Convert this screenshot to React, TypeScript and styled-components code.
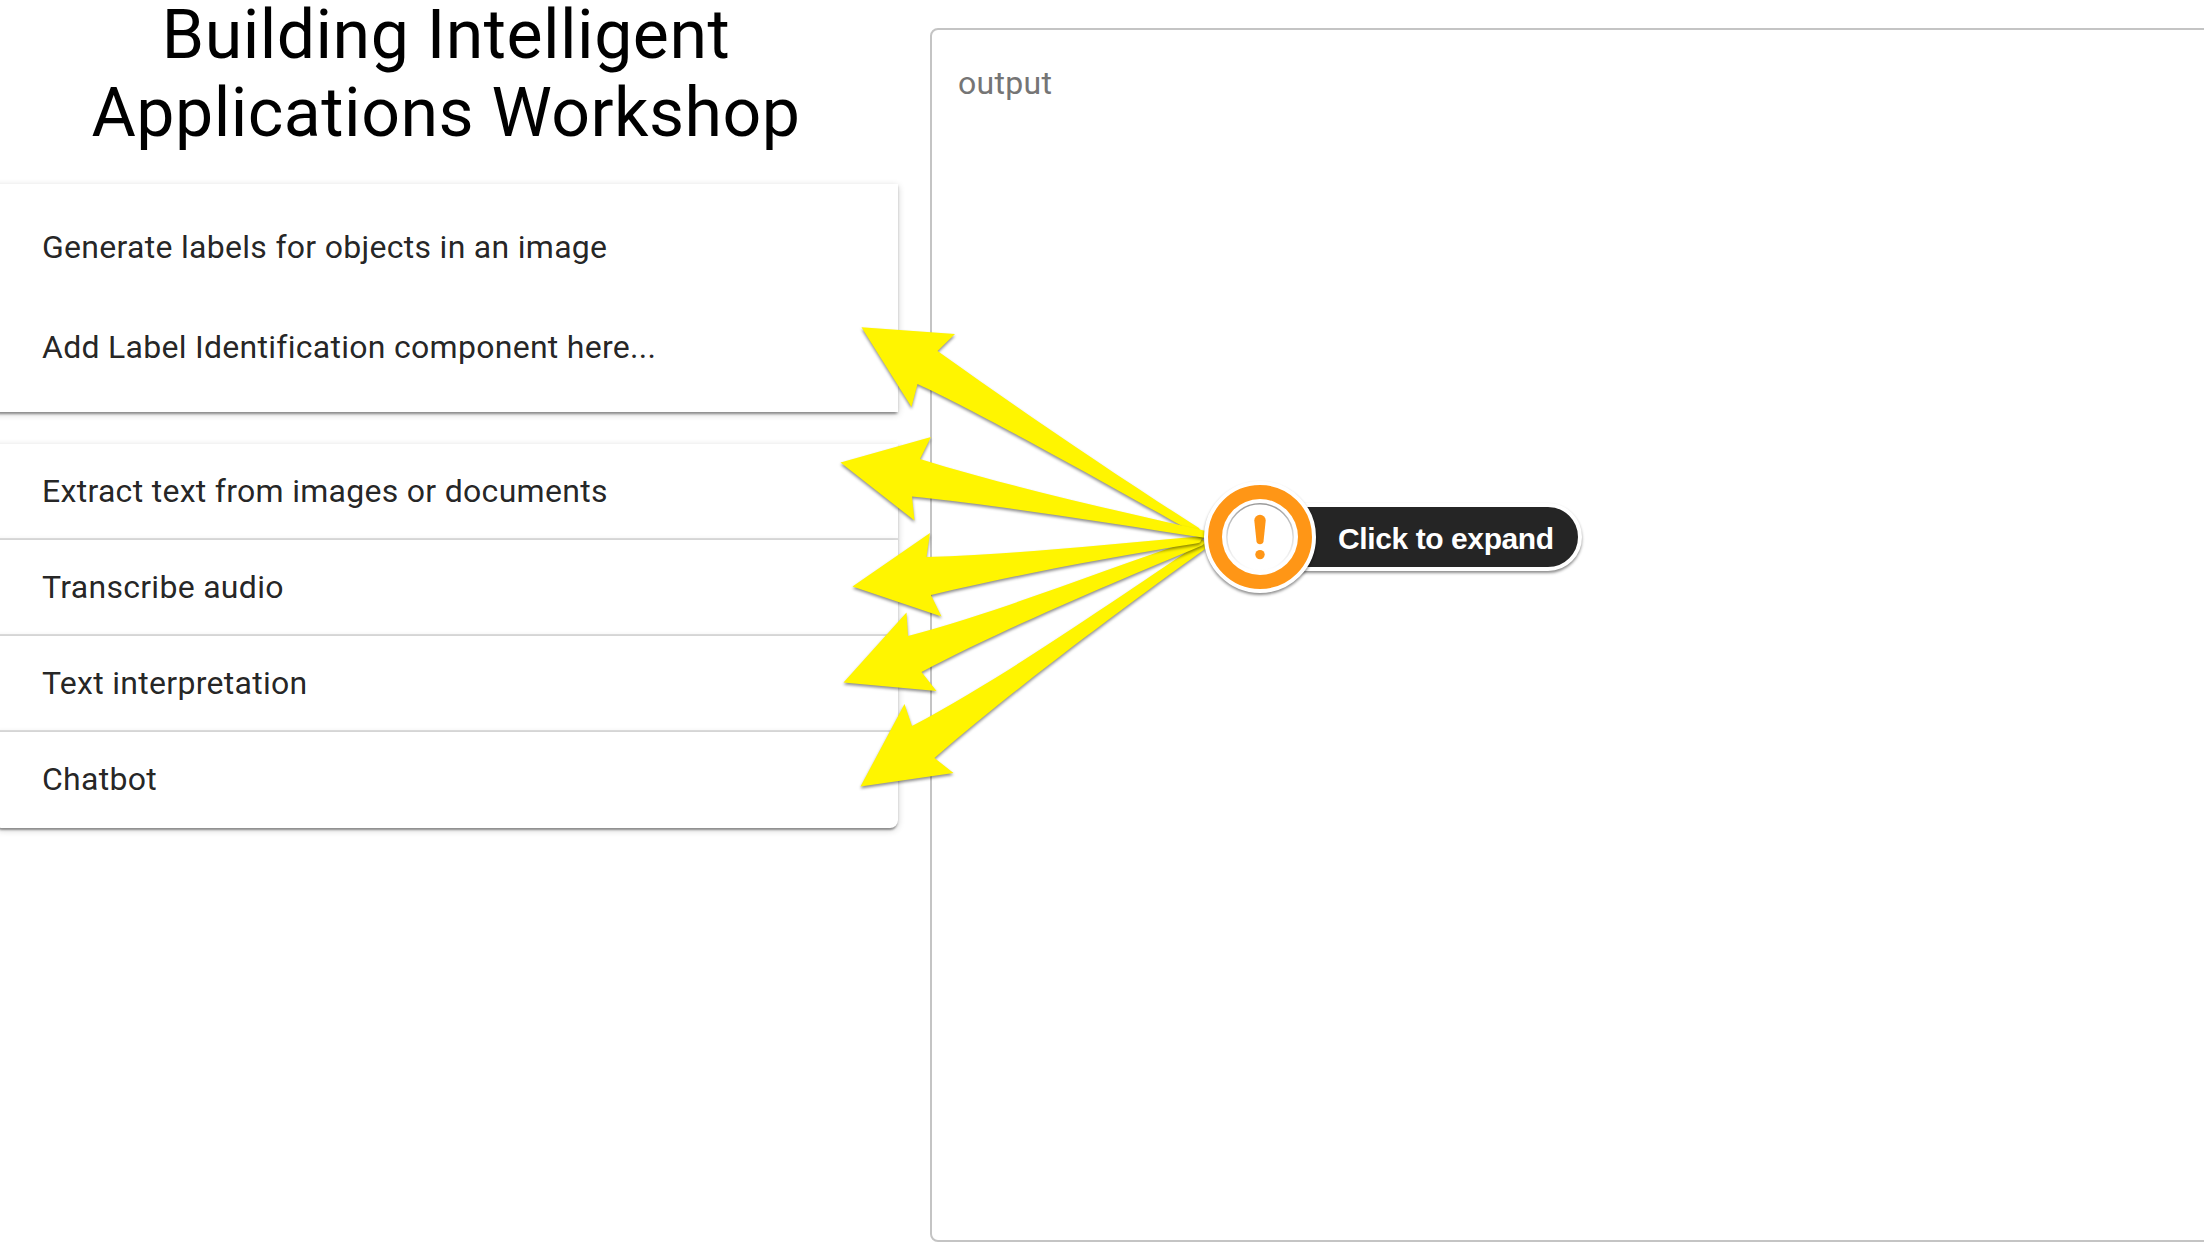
import React from "react";
import styled, { createGlobalStyle } from "styled-components";

const GlobalStyle = createGlobalStyle`
  * { box-sizing: border-box; }
  html, body { margin: 0; overflow: hidden; background: #fff; }
  body { font-family: Roboto, "Liberation Sans", sans-serif; }
`;

const Page = styled.main`
  position: relative;
  display: flex;
  gap: 32px;
  width: 2204px;
  height: 1250px;
  overflow: hidden;
  background: #fff;
`;

const Sidebar = styled.section`
  width: 898px;
  flex: none;
`;

const Title = styled.h1`
  margin: -4px 0 0;
  height: 188px;
  padding-right: 6px;
  font-size: 68px;
  font-weight: 400;
  line-height: 78px;
  letter-spacing: 0.5px;
  text-align: center;
  color: #000;
`;

const AccordionList = styled.div`
  display: flex;
  flex-direction: column;
  margin-left: -6px;
`;

const Panel = styled.article<{ $expanded?: boolean; $divided?: boolean; $last?: boolean }>`
  position: relative;
  height: ${(p) => (p.$expanded ? "228px" : "96px")};
  margin-bottom: ${(p) => (p.$expanded ? "32px" : "0")};
  padding-left: 48px;
  background: #fff;
  color: rgba(0, 0, 0, 0.87);
  border-radius: ${(p) => (p.$last ? "0 0 8px 8px" : "0")};
  box-shadow: 0 4px 2px -2px rgba(0, 0, 0, 0.22), 0 2px 2px 0 rgba(0, 0, 0, 0.18),
    0 2px 7px 0 rgba(0, 0, 0, 0.2);

  &::before {
    content: "";
    display: ${(p) => (p.$divided ? "block" : "none")};
    position: absolute;
    top: -2px;
    left: 0;
    right: 0;
    height: 2px;
    background: rgba(0, 0, 0, 0.12);
  }
`;

const Summary = styled.div<{ $tall?: boolean }>`
  display: flex;
  align-items: center;
  height: ${(p) => (p.$tall ? "126px" : "94px")};
  font-size: 32px;
  letter-spacing: 0.29px;
`;

const Details = styled.p`
  margin: 13px 0 0;
  font-size: 32px;
  line-height: 48px;
  letter-spacing: 0.28px;
`;

const Output = styled.section`
  flex: none;
  width: 1400px;
  height: 1214px;
  margin-top: 28px;
  padding: 30px 26px;
  border: 2px solid #c4c4c4;
  border-radius: 8px;
  font-size: 32px;
  line-height: 46px;
  letter-spacing: 0.3px;
  color: #757575;
`;

const Arrows = styled.svg`
  position: absolute;
  inset: 0;
  pointer-events: none;
  path { filter: drop-shadow(0 2px 1.5px rgba(0, 0, 0, 0.45)); }
`;

const Callout = styled.div`
  position: absolute;
  left: 1204px;
  top: 481px;
  display: flex;
  align-items: center;
`;

const Badge = styled.div`
  position: relative;
  z-index: 1;
  display: grid;
  place-items: center;
  width: 112px;
  height: 112px;
  border: 4px solid #fff;
  border-radius: 50%;
  background: #ff9616;
  box-shadow: 0 2px 3px rgba(0, 0, 0, 0.45);
`;

const BadgeFace = styled.div`
  display: grid;
  place-items: center;
  width: 76px;
  height: 76px;
  border-radius: 50%;
  background: #fff;
`;

const Pill = styled.div`
  width: 318px;
  height: 68px;
  margin-left: -52px;
  padding-left: 70px;
  border: 4px solid #fff;
  border-radius: 34px;
  background: #252525;
  box-shadow: 0 2px 3px rgba(0, 0, 0, 0.45);
  color: #fff;
  font: bold 30px/64px "Liberation Sans", sans-serif;
  letter-spacing: -0.4px;
  white-space: nowrap;
`;

const arrows = [
  "M860.5 786.5 L904.5 704 L912 726 C1010 674 1120 596 1200 543 L1206 542 L1205 549 C1120 610 1010 692 934.5 758 L953.5 773 Z",
  "M843.5 682.5 L906.5 612.5 L908 636 C1000 612 1110 567 1200 538 Q1208 542 1202 545.5 C1120 580 1000 630 921.5 672 L936.5 691 Z",
  "M852.5 586.5 L930 533 L926.5 557 C1010 555 1110 544 1206 536 L1201 540 Q1201 543 1196 543.5 C1110 557 1010 576 931 595 L941.5 616.5 Z",
  "M861.5 327.3 L955 334 L937.5 351 C1020 410 1120 478 1199 528 L1201 532 L1204 537 L1181 525.5 C1100 480 980 413 917.5 384 L911.5 407 Z",
  "M840.5 462.5 L931 437 L920 459 C1010 487 1110 509 1206 531 L1206 538 C1110 523 990 504 912 496.5 L914.5 520.5 Z",
];

const tasks = ["Extract text from images or documents", "Transcribe audio", "Text interpretation", "Chatbot"];

export default function App() {
  return (
    <Page>
      <GlobalStyle />
      <Sidebar>
        <Title>
          Building Intelligent
          <br />
          Applications Workshop
        </Title>
        <AccordionList>
          <Panel $expanded>
            <Summary $tall>Generate labels for objects in an image</Summary>
            <Details>Add Label Identification component here...</Details>
          </Panel>
          {tasks.map((task, i) => (
            <Panel key={task} $divided={i > 0} $last={i === tasks.length - 1}>
              <Summary>{task}</Summary>
            </Panel>
          ))}
        </AccordionList>
      </Sidebar>
      <Output>output</Output>
      <Arrows width="2204" height="1250" viewBox="0 0 2204 1250" fill="#fff500">
        {arrows.map((d) => (
          <path key={d} d={d} />
        ))}
      </Arrows>
      <Callout>
        <Badge>
          <BadgeFace>
            <svg width="68" height="68" viewBox="0 0 68 68">
              <defs>
                <linearGradient id="rim" x1="0" y1="0" x2="0" y2="1">
                  <stop offset="0" stopColor="#999" />
                  <stop offset="0.5" stopColor="#ddd" />
                  <stop offset="1" stopColor="#fff" />
                </linearGradient>
              </defs>
              <circle cx="34" cy="34" r="33.2" fill="none" stroke="url(#rim)" strokeWidth="1.5" />
              <path d="M28.3 17.5 a5.7 5.7 0 0 1 11.4 0 L37.5 38.5 a3.6 3.6 0 0 1 -7 0 Z" fill="#ff9616" />
              <circle cx="34" cy="51.6" r="4.7" fill="#ff9616" />
            </svg>
          </BadgeFace>
        </Badge>
        <Pill>Click to expand</Pill>
      </Callout>
    </Page>
  );
}
